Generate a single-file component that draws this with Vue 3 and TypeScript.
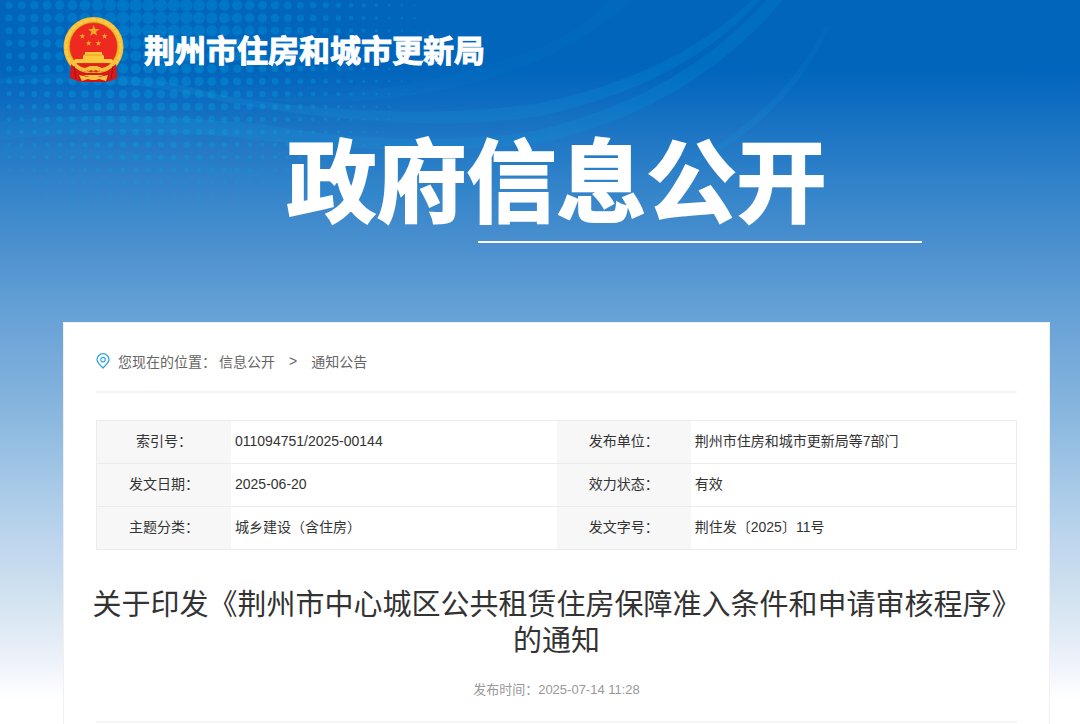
<script setup lang="ts">
interface Dot {
  x: number
  y: number
  r: number
}

interface InfoCell {
  label: string
  value: string
}

const PITCH = 12.67

const columnRadius = (x: number): number =>
  x < 125 ? 3.3 + (x / 125) * 2.9 : x < 190 ? 6.2 : Math.max(0, 6.2 - ((x - 190) / 245) * 5.8)

const rowFactor = (y: number): number => (y < 30 ? 1 : Math.max(0, 1 - (y - 30) / 220))

const dots: Dot[] = []
for (let row = 0; row < 19; row++) {
  for (let col = 0; col < 34; col++) {
    const x = 9 + col * PITCH
    const y = 5.3 + row * PITCH
    const r = columnRadius(x) * rowFactor(y)
    if (r > 0.4) dots.push({ x, y, r })
  }
}

const rows: InfoCell[][] = [
  [
    { label: '索引号：', value: '011094751/2025-00144' },
    { label: '发布单位：', value: '荆州市住房和城市更新局等7部门' },
  ],
  [
    { label: '发文日期：', value: '2025-06-20' },
    { label: '效力状态：', value: '有效' },
  ],
  [
    { label: '主题分类：', value: '城乡建设（含住房）' },
    { label: '发文字号：', value: '荆住发〔2025〕11号' },
  ],
]

const star = (cx: number, cy: number, r: number): string =>
  Array.from({ length: 10 }, (_, i) => {
    const radius = i % 2 ? r * 0.4 : r
    const a = (Math.PI / 5) * i - Math.PI / 2
    return `${(cx + radius * Math.cos(a)).toFixed(2)},${(cy + radius * Math.sin(a)).toFixed(2)}`
  }).join(' ')

const stars: string[] = [
  star(30.7, 14, 6),
  star(19.3, 19.3, 3),
  star(41.7, 19.3, 3),
  star(25.7, 26.3, 3),
  star(35.3, 26.3, 3),
]
</script>

<template>
  <div class="page">
    <svg class="backdrop" width="1080" height="322" viewBox="0 0 1080 322" aria-hidden="true">
      <defs>
        <linearGradient id="dotFade" x1="0" y1="0" x2="0" y2="250" gradientUnits="userSpaceOnUse">
          <stop offset="0" stop-color="#0099dc" stop-opacity=".34" />
          <stop offset=".6" stop-color="#00a5e0" stop-opacity=".36" />
          <stop offset="1" stop-color="#00a5e0" stop-opacity=".2" />
        </linearGradient>
        <linearGradient id="tailFade" x1="640" y1="190" x2="828" y2="26" gradientUnits="userSpaceOnUse">
          <stop offset="0" stop-color="#28a0e0" stop-opacity="0" />
          <stop offset=".4" stop-color="#1496dc" stop-opacity=".18" />
          <stop offset="1" stop-color="#1496dc" stop-opacity=".08" />
        </linearGradient>
        <linearGradient id="bandFade" x1="0" y1="0" x2="780" y2="0" gradientUnits="userSpaceOnUse">
          <stop offset="0" stop-color="#14a0dc" stop-opacity=".1" />
          <stop offset=".25" stop-color="#14a0dc" stop-opacity=".2" />
          <stop offset=".5" stop-color="#14a0dc" stop-opacity=".16" />
          <stop offset=".85" stop-color="#0096dc" stop-opacity=".22" />
          <stop offset="1" stop-color="#0096dc" stop-opacity=".16" />
        </linearGradient>
      </defs>
      <g fill="url(#dotFade)">
        <circle v-for="(d, i) in dots" :key="i" :cx="d.x" :cy="d.y" :r="d.r" />
      </g>
      <g fill="url(#bandFade)">
        <path d="M0 78C80 68 150 74 215 94C330 115 460 116 540 103C630 84 700 50 752 0H760C710 56 640 94 540 116C450 130 330 122 220 101C150 82 80 80 0 84Z" />
        <path d="M0 122C80 112 170 116 260 124C360 142 460 144 540 130C630 106 700 72 767 0H783C720 74 640 121 540 143C440 156 330 148 240 138C150 128 80 132 0 140Z" />
      </g>
      <g fill="#0f9bdc" fill-opacity=".08">
        <path d="M0 146C100 144 180 158 260 170C340 188 440 192 540 176C460 202 360 204 280 190C190 170 100 150 0 158Z" />
        <path d="M240 98C360 100 460 76 540 48C570 34 595 18 609 0H631C608 24 580 40 540 60C450 98 350 110 240 98Z" />
      </g>
      <path d="M825 26C786 104 722 150 640 188C722 162 796 104 829 28Z" fill="url(#tailFade)" />
    </svg>

    <header class="masthead">
      <svg class="emblem" width="62" height="66" viewBox="0 0 62 66" role="img" aria-label="国徽">
        <path d="M8 47L7 61L15 64L20 65H42L47 64L54 61L53 47Z" fill="#cf1417" />
        <circle cx="30.5" cy="30" r="30" fill="#f4b92f" />
        <circle cx="30.5" cy="30" r="27.5" fill="none" stroke="#fac94a" stroke-width="3" stroke-dasharray="6 1" />
        <circle cx="30.5" cy="29.500" r="24.2" fill="#c98313" />
        <circle cx="30.5" cy="29.500" r="23.6" fill="#ee2a20" />
        <g fill="#e9ac2b">
          <polygon v-for="(points, i) in stars" :key="i" :points="points" />
        </g>
        <path d="M22 35H39V37L41 39V42H49L51 46H10L12 42H20V39L22 37Z" fill="#fbc83c" />
        <path d="M22 38H39" stroke="#e89d22" stroke-width="1" />
        <path d="M11 47H50C47 51 43 54 38 55H23C18 54 14 51 11 47Z" fill="#df231c" />
        <path d="M8 47C13 52 19 56 26 56H35C42 56 48 52 53 47L54 61L47 64L45 58H16L15 64L7 61Z" fill="#d8191a" />
        <path d="M11 49L13 62M50 49L48 62" stroke="#a81112" stroke-width="1" fill="none" />
        <path d="M7 44C12 50 17 54 24 55L28 53L30.500 54L33 53L37 55C44 54 49 50 54 44L52 42C48 47 44 50 39 51L34 49H27L22 51C17 50 13 47 9 42Z" fill="#f6c03a" />
        <path d="M24 53C27 56 29 56 30.500 54C32 56 34 56 37 53" fill="none" stroke="#c98313" stroke-width="1" />
        <path d="M16 58L25 60L28 58H33L36 60L45 58L43 64L36 62L33 63H28L25 62L19 64Z" fill="#f6c340" />
      </svg>
      <p class="bureau">荆州市住房和城市更新局</p>
    </header>

    <section class="hero">
      <h1>政府信息公开</h1>
      <div class="rule"></div>
    </section>

    <main class="card">
      <nav class="crumbs" aria-label="您现在的位置">
        <svg class="pin" width="14" height="16" viewBox="0 0 14 16" fill="none" stroke="#34a7e0" aria-hidden="true">
          <path d="M7 15C4.500 12.500 1 9.700 1 6.600A6 5.900 0 0 1 13 6.600C13 9.700 9.500 12.500 7 15Z" stroke-width="1.300" />
          <circle cx="7" cy="6.600" r="2.300" stroke-width="1.200" />
        </svg>
        <span class="where">您现在的位置：</span>
        <a href="#info">信息公开</a>
        <span class="sep">&gt;</span>
        <a href="#notice">通知公告</a>
      </nav>

      <table class="info">
        <tbody>
          <tr v-for="(cells, i) in rows" :key="i">
            <template v-for="cell in cells" :key="cell.label">
              <th scope="row">{{ cell.label }}</th>
              <td>{{ cell.value }}</td>
            </template>
          </tr>
        </tbody>
      </table>

      <h2>关于印发《荆州市中心城区公共租赁住房保障准入条件和申请审核程序》的通知</h2>

      <p class="meta"><span>发布时间：</span><time datetime="2025-07-14T11:28">2025-07-14 11:28</time></p>
    </main>
  </div>
</template>

<style>
body {
  margin: 0;
  background: #fff;
}
</style>

<style scoped>
.page {
  position: relative;
  box-sizing: border-box;
  min-height: 100vh;
  padding: 0 30px 0 63px;
  overflow: hidden;
  font-family: "Liberation Sans", "Noto Sans CJK SC", sans-serif;
  font-size: 14px;
  color: #333;
  background: linear-gradient(
    #0065bb 0,
    #0065bb 68px,
    #0f6dc0 104px,
    #1e76c4 136px,
    #3484ca 190px,
    #498fce 242px,
    #5a9ad3 285px,
    #69a2d7 322px,
    #8bb8df 420px,
    #a4c8e6 480px,
    #c0d6ee 545px,
    #d2e3f0 600px,
    #e8eff8 650px,
    #fff 700px
  );
}

.backdrop {
  position: absolute;
  top: 0;
  left: 0;
}

.masthead {
  position: relative;
  display: flex;
  align-items: center;
  gap: 19px;
  padding-top: 17px;
}

.bureau {
  margin: 0;
  padding-top: 4px;
  font-size: 31px;
  font-weight: 700;
  line-height: 40px;
  color: #fff;
  -webkit-text-stroke: 1px #fff;
}

.hero {
  position: relative;
  padding: 44px 0 79px;
}

h1 {
  margin: 0;
  font-size: 90px;
  font-weight: 700;
  line-height: 114px;
  text-align: center;
  color: #fff;
  -webkit-text-stroke: 2px #fff;
}

.rule {
  width: 45%;
  height: 2px;
  margin-left: 42%;
  background: #fff;
}

.card {
  position: relative;
  padding: 0 32px 24px;
  background: #fff;
  border: 1px solid #f0f0f0;
}

.crumbs {
  display: flex;
  align-items: center;
  height: 60px;
  padding-top: 8px;
  border-bottom: 2px solid #f4f4f4;
  color: #666;
}

.crumbs a {
  color: #666;
  text-decoration: none;
}

.pin {
  margin-right: 8px;
}

.where {
  margin-right: 3px;
}

.sep {
  margin: 0 14px;
}

.info {
  width: 100%;
  margin-top: 27px;
  table-layout: fixed;
  border: 1px solid #ececec;
  border-collapse: collapse;
}

.info th,
.info td {
  height: 40px;
  padding: 0 4px 2px;
  border-top: 1px solid #ececec;
  line-height: 20px;
}

.info th {
  width: 126px;
  background: #f7f7f7;
  font-weight: 400;
  text-align: center;
}

.info td {
  text-align: left;
}

h2 {
  margin: 37px -4px 0;
  font-size: 29px;
  font-weight: 400;
  line-height: 36px;
  text-align: center;
  text-spacing-trim: space-all;
}

.meta {
  display: flex;
  justify-content: center;
  margin: 0;
  padding: 22px 0;
  border-bottom: 2px solid #f4f4f4;
  font-size: 13px;
  line-height: 18px;
  color: #999;
}
</style>
